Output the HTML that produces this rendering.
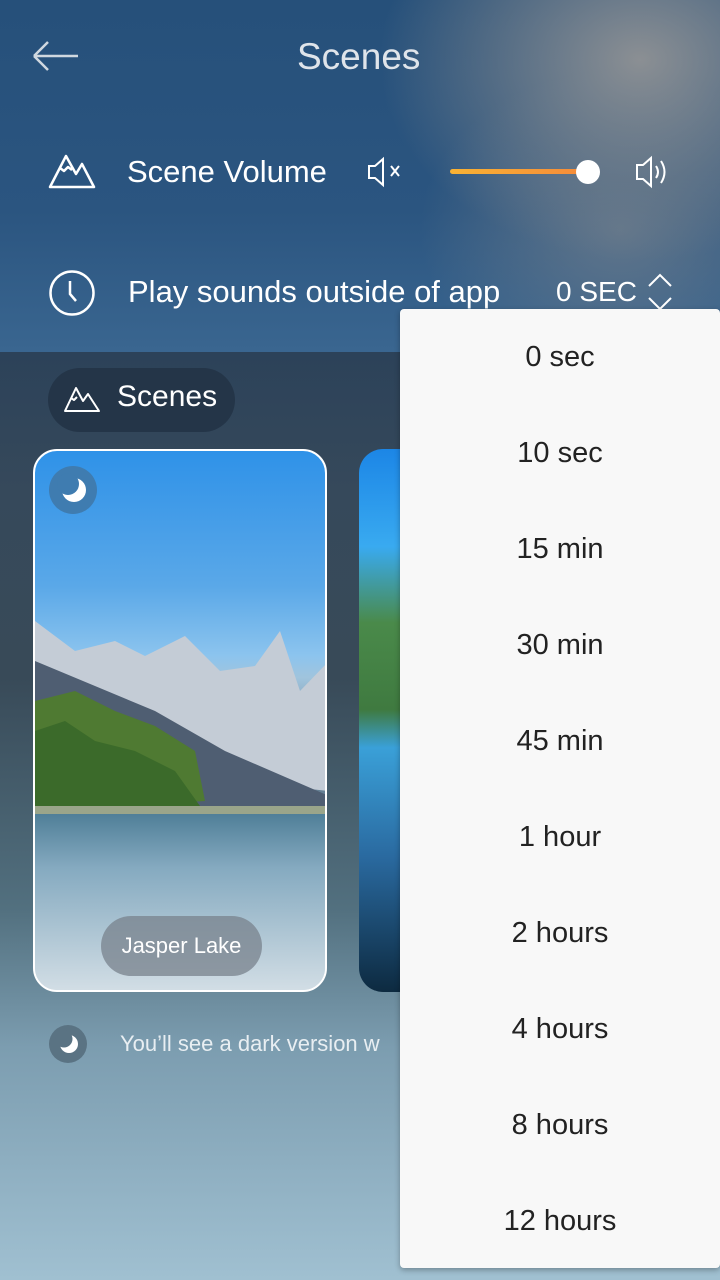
<!DOCTYPE html>
<html><head><meta charset="utf-8"><style>
*{margin:0;padding:0;box-sizing:border-box}
body{width:720px;height:1280px;overflow:hidden;position:relative;font-family:"Liberation Sans",sans-serif;
background:#3a4d5c;}
.topbg{position:absolute;left:0;top:0;width:720px;height:352px;
background:radial-gradient(ellipse 260px 200px at 640px 60px,rgba(150,150,150,.9),rgba(120,130,140,.5) 60%,transparent 100%),
radial-gradient(ellipse 200px 160px at 620px 230px,rgba(110,125,140,.8),transparent 100%),
linear-gradient(180deg,#26507a 0%,#2b5580 60%,#3a6690 100%);}
.lower{position:absolute;left:0;top:352px;width:720px;height:928px;
background:linear-gradient(180deg,#2c4259 0%,#36495b 15%,#384a58 35%,#52707f 60%,#7c9db0 75%,#a0c0d1 100%);}
.t{position:absolute;color:#fff;white-space:nowrap}
.menu{position:absolute;left:400px;top:309px;width:320px;height:959px;background:#f8f8f8;border-radius:4px;box-shadow:0 2px 6px rgba(0,0,0,.3)}
.menu div{position:absolute;left:0;width:320px;text-align:center;font-size:29px;color:#222;height:40px;line-height:40px}
.card{position:absolute;left:33px;top:449px;width:294px;height:543px;border:2px solid #fff;border-radius:24px;overflow:hidden;
background:linear-gradient(180deg,#2f92e8 0%,#5aa8e8 25%,#8cc4ee 38%,#a0c4dd 42%,#7f98b0 50%,#5a6c7d 58%,#6b8aa0 66%,#8fb0c3 75%,#b7ccd8 90%,#c7d7e0 100%)}
</style></head><body>
<div class="topbg"></div>
<div class="lower"></div>
<svg style="position:absolute;left:30px;top:38px" width="52" height="36"><path d="M4 18H48M4 18L18 4M4 18L18 32" stroke="#d0d8e0" stroke-width="2.5" fill="none"/></svg>
<div class="t" style="left:297px;top:36px;font-size:37px;color:#dfe4ea">Scenes</div>
<svg style="position:absolute;left:48px;top:152px" width="48" height="38"><path d="M2 35L18 4L28 22L34 12L46 35Z M12 16L16 19L20 15L24 18" stroke="#fff" stroke-width="2.5" fill="none" stroke-linejoin="round"/></svg>
<div class="t" style="left:127px;top:154px;font-size:31px">Scene Volume</div>
<svg style="position:absolute;left:366px;top:155px" width="40" height="34"><path d="M3 11H9L17 4V30L9 23H3Z" stroke="#fff" stroke-width="2" fill="none"/><path d="M25 11L33 21M33 11L25 21" stroke="#fff" stroke-width="2"/></svg>
<div style="position:absolute;left:450px;top:169px;width:138px;height:5px;border-radius:3px;background:linear-gradient(90deg,#f9b233,#f58a3a)"></div>
<div style="position:absolute;left:576px;top:160px;width:24px;height:24px;border-radius:50%;background:#fff"></div>
<svg style="position:absolute;left:634px;top:153px" width="40" height="38"><path d="M3 12H9L17 5V33L9 26H3Z" stroke="#fff" stroke-width="2" fill="none"/><path d="M22 13Q26 19 22 25M27 8Q34 19 27 30" stroke="#fff" stroke-width="2" fill="none"/></svg>
<svg style="position:absolute;left:48px;top:269px" width="48" height="48"><circle cx="24" cy="24" r="21.5" stroke="#fff" stroke-width="2.5" fill="none"/><path d="M22 12V25L28 32" stroke="#fff" stroke-width="2.5" fill="none"/></svg>
<div class="t" style="left:128px;top:274px;font-size:31px">Play sounds outside of app</div>
<div class="t" style="left:556px;top:276px;font-size:28px">0 SEC</div>
<svg style="position:absolute;left:646px;top:272px" width="28" height="40"><path d="M3 14L14 3L25 14M3 26L14 37L25 26" stroke="#fff" stroke-width="2" fill="none"/></svg>
<div style="position:absolute;left:48px;top:368px;width:187px;height:64px;border-radius:32px;background:#243548"></div>
<svg style="position:absolute;left:63px;top:385px" width="38" height="28"><path d="M2 26L13 3L20 16L25 9L36 26Z M8 13L11 15L14 12" stroke="#fff" stroke-width="2" fill="none" stroke-linejoin="round"/></svg>
<div class="t" style="left:117px;top:380px;font-size:30px">Scenes</div>
<div class="card">
<svg style="position:absolute;left:0;top:0" width="294" height="543">
<defs><linearGradient id="w" x1="0" y1="0" x2="0" y2="1"><stop offset="0" stop-color="#4f7f98"/><stop offset=".3" stop-color="#85aac0"/><stop offset="1" stop-color="#d4dfe6"/></linearGradient></defs>
<path d="M0 170L40 200L80 190L110 205L150 185L185 220L220 215L245 180L265 240L294 210V340L200 330L100 290L0 230Z" fill="#c4ccd6"/>
<path d="M0 210L60 235L120 260L190 300L294 345V360L0 360Z" fill="#4f5e72"/>
<path d="M0 250L40 240L80 260L120 275L160 300L170 350L0 360Z" fill="#4f7a32"/>
<path d="M0 280L30 270L60 290L100 300L140 320L165 355L0 360Z" fill="#3b6a2a"/>
<rect x="0" y="355" width="294" height="8" fill="#9aa58a"/>
<rect x="0" y="363" width="294" height="180" fill="url(#w)"/>
</svg>
<div style="position:absolute;left:14px;top:15px;width:48px;height:48px;border-radius:50%;background:#3f7cb0"></div>
<svg style="position:absolute;left:14px;top:15px" width="48" height="48"><circle cx="25" cy="24" r="12" fill="#fff"/><circle cx="19" cy="18" r="11" fill="#3f7cb0"/></svg>
<div style="position:absolute;left:66px;top:465px;width:161px;height:60px;border-radius:30px;background:rgba(120,130,140,.75);color:#fff;font-size:22px;text-align:center;line-height:60px">Jasper Lake</div>
</div>
<div style="position:absolute;left:359px;top:449px;width:60px;height:543px;border-radius:24px 0 0 24px;background:linear-gradient(180deg,#1c86e6 0%,#39aaf0 18%,#4a8a4a 32%,#3f7a40 48%,#3aa0d8 55%,#2a6aa0 75%,#0d2a40 100%)"></div>
<svg style="position:absolute;left:48px;top:1025px" width="40" height="38"><circle cx="20" cy="19" r="19" fill="#5a7383"/><circle cx="21" cy="19" r="9" fill="#fff"/><circle cx="16" cy="14" r="8.5" fill="#5a7383"/></svg>
<div class="t" style="left:120px;top:1031px;font-size:22px;color:#e8eef2">You’ll see a dark version w</div>
<div class="menu">
<div style="top:28px">0 sec</div>
<div style="top:124px">10 sec</div>
<div style="top:220px">15 min</div>
<div style="top:316px">30 min</div>
<div style="top:412px">45 min</div>
<div style="top:508px">1 hour</div>
<div style="top:604px">2 hours</div>
<div style="top:700px">4 hours</div>
<div style="top:796px">8 hours</div>
<div style="top:892px">12 hours</div>
</div>
</body></html>
